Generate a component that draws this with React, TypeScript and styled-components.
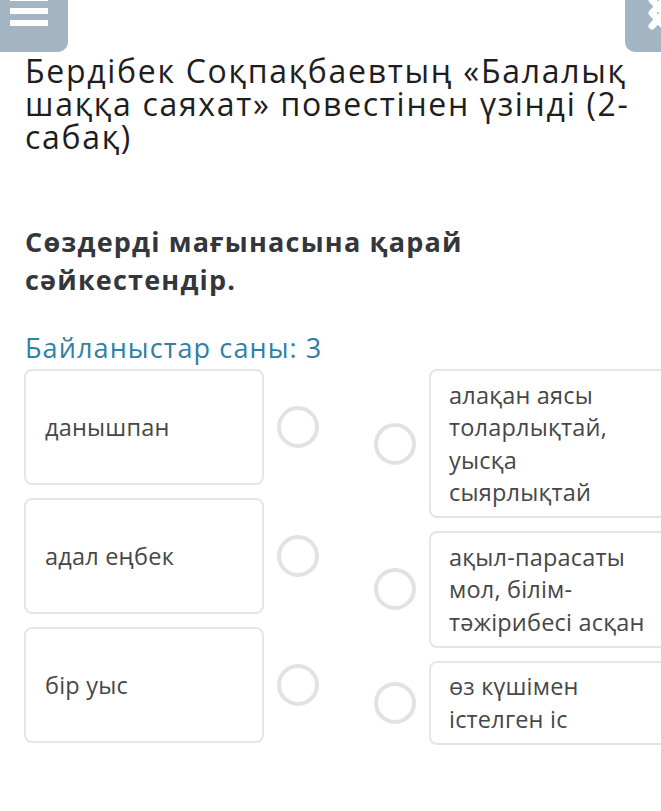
import React from "react";
import styled, { createGlobalStyle } from "styled-components";

const Global = createGlobalStyle`
  html, body { margin: 0; padding: 0; background: #ffffff; overflow-x: hidden; }
  body { font-family: "Open Sans", "Noto Sans", sans-serif; }
`;

const Page = styled.div`
  width: 661px;
  overflow: hidden;
  padding-bottom: 60px;
`;

const TopBar = styled.div`
  display: flex;
  justify-content: space-between;
  height: 52px;
`;

const MenuButton = styled.div`
  width: 68px;
  height: 52px;
  background: #a3b5c3;
  border-bottom-right-radius: 10px;
  position: relative;
`;

const MenuLine = styled.span<{ $top: number }>`
  position: absolute;
  left: 10px;
  width: 38px;
  height: 6px;
  top: ${(p) => p.$top}px;
  background: #ffffff;
`;

const CloseButton = styled.div`
  width: 36px;
  height: 52px;
  background: #a3b5c3;
  border-bottom-left-radius: 10px;
  overflow: hidden;
  position: relative;
`;

const Content = styled.div`
  padding: 2px 14px 0 25px;
`;

const Title = styled.h1`
  margin: 0;
  font-weight: 400;
  font-size: 32px;
  line-height: 33px;
  color: #1e1e1e;
  letter-spacing: 1.7px;
`;

const Question = styled.h2`
  margin: 70px 0 0;
  font-weight: 700;
  font-size: 27px;
  line-height: 38px;
  color: #33373b;
  letter-spacing: 1.2px;
`;

const Count = styled.div`
  margin-top: 32px;
  font-size: 27px;
  line-height: 34px;
  color: #2f7fa6;
  letter-spacing: 1.1px;
`;

const Board = styled.div`
  display: flex;
  align-items: flex-start;
  gap: 55px;
  margin-top: 4px;
  padding-left: 24px;
`;

const Column = styled.div`
  display: flex;
  flex-direction: column;
  gap: 13px;
`;

const Row = styled.div`
  display: flex;
  align-items: center;
  gap: 13px;
`;

const Card = styled.div<{ $centered?: boolean }>`
  box-sizing: border-box;
  width: 240px;
  flex-shrink: 0;
  border: 2px solid #e3e5e7;
  border-radius: 8px;
  background: #fff;
  color: #474747;
  font-size: 23.5px;
  line-height: 32.5px;
  letter-spacing: 0.2px;
  padding: ${(p) => (p.$centered ? "0 19px" : "7.5px 18px")};
  min-height: ${(p) => (p.$centered ? "116px" : "0")};
  display: flex;
  align-items: center;
`;

const Dot = styled.div`
  box-sizing: border-box;
  width: 42px;
  height: 42px;
  flex-shrink: 0;
  border-radius: 50%;
  border: 4px solid #dfe3e6;
  background: #fff;
`;

const left = ["данышпан", "адал еңбек", "бір уыс"];
const right = [
  "алақан аясы толарлықтай, уысқа сыярлықтай",
  "ақыл-парасаты мол, білім-тәжірибесі асқан",
  "өз күшімен істелген іс",
];

export default function App() {
  return (
    <Page>
      <Global />
      <TopBar>
        <MenuButton>
          <MenuLine $top={-5} />
          <MenuLine $top={8} />
          <MenuLine $top={20} />
        </MenuButton>
        <CloseButton>
          <svg width="36" height="52" viewBox="0 0 36 52">
            <path
              d="M27 0 L39 13 M39 0 L27 13 M27 13 L39 26 M39 13 L27 26"
              stroke="#ffffff"
              strokeWidth="7"
              fill="none"
              strokeLinecap="round"
            />
          </svg>
        </CloseButton>
      </TopBar>
      <Content>
        <Title>Бердібек Соқпақбаевтың «Балалық шаққа саяхат» повестінен үзінді (2-сабақ)</Title>
        <Question>Сөздерді мағынасына қарай сәйкестендір.</Question>
        <Count>Байланыстар саны: 3</Count>
      </Content>
      <Board>
        <Column>
          {left.map((t) => (
            <Row key={t}>
              <Card $centered>{t}</Card>
              <Dot />
            </Row>
          ))}
        </Column>
        <Column>
          {right.map((t) => (
            <Row key={t}>
              <Dot />
              <Card>{t}</Card>
            </Row>
          ))}
        </Column>
      </Board>
    </Page>
  );
}
